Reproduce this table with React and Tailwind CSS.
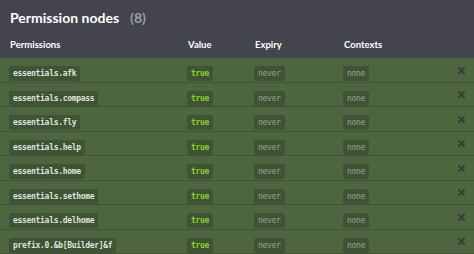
import React from 'react';

const nodes = [
    'essentials.afk',
    'essentials.compass',
    'essentials.fly',
    'essentials.help',
    'essentials.home',
    'essentials.sethome',
    'essentials.delhome',
    'prefix.0.&b[Builder]&f',
];

function Pill({ children, className }) {
    return (
        <span
            className={'inline-block rounded-[2px] bg-[#3e5434] px-[4px] leading-[15px] text-[8px] tracking-[-0.3px] ' + className}
            style={{ fontFamily: '"DejaVu Sans Mono", monospace' }}
        >
            {children}
        </span>
    );
}

function Row({ node }) {
    return (
        <div className="grid h-[24.5px] grid-cols-[178px_67px_89px_1fr_16px] items-center border-b border-[#3f5236] pl-[9px]">
            <div><Pill className="text-[#dfe3dc] font-semibold">{node}</Pill></div>
            <div><Pill className="text-[#8fd12a] font-semibold">true</Pill></div>
            <div><Pill className="text-[#9aa595]">never</Pill></div>
            <div><Pill className="text-[#9aa595]">none</Pill></div>
            <div className="flex items-center">
                <svg width="7" height="7" viewBox="0 0 7 7">
                    <path d="M1 1 L6 6 M6 1 L1 6" stroke="#323d33" strokeWidth="1.8" strokeLinecap="round" />
                </svg>
            </div>
        </div>
    );
}

export default function App() {
    return (
        <div className="h-[254px] w-[474px] overflow-hidden bg-[#4d6640]" style={{ fontFamily: 'Lato, sans-serif' }}>
            <div className="h-[58px] bg-[#44444f] px-[10px]">
                <div className="flex items-baseline pt-[7px] text-[14px] font-bold text-white">
                    Permission nodes
                    <span className="ml-[11px] text-[#9d9da6]">(8)</span>
                </div>
                <div className="mt-[10px] grid grid-cols-[178px_67px_89px_1fr] text-[9.5px] font-bold text-white">
                    <span>Permissions</span>
                    <span>Value</span>
                    <span>Expiry</span>
                    <span>Contexts</span>
                </div>
            </div>
            {nodes.map((node, index) => (
                <Row key={index} node={node} />
            ))}
        </div>
    );
}
